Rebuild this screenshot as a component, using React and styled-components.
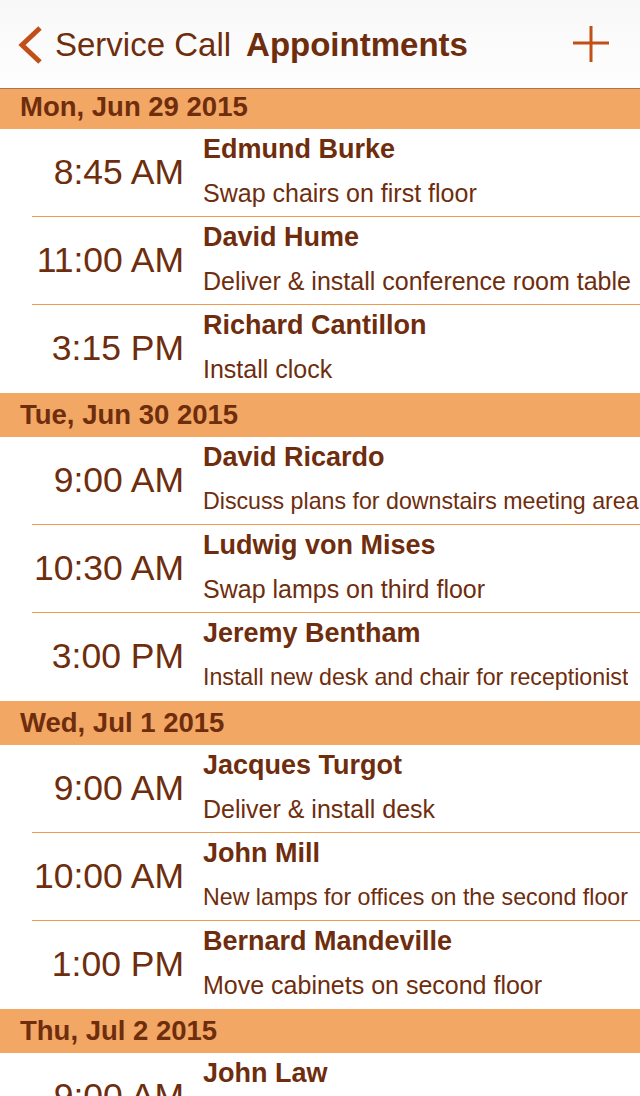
import React from 'react';
import styled, { createGlobalStyle } from 'styled-components';

const GlobalStyle = createGlobalStyle`
  html, body {
    margin: 0;
    padding: 0;
    overflow: hidden;
    background: #ffffff;
    font-family: "Liberation Sans", Arial, sans-serif;
  }
`;

const brown = '#6e2d0d';
const accent = '#c24f18';

const Screen = styled.div`
  position: relative;
  width: 640px;
  height: 1096px;
  overflow: hidden;
  background: #fff;
`;

const NavBar = styled.div`
  position: absolute;
  top: 0;
  left: 0;
  right: 0;
  z-index: 2;
  height: 88px;
  display: flex;
  align-items: center;
  padding: 0 0 0 17px;
  background: linear-gradient(#f8f8f8, #fefefe);
  border-bottom: 1px solid #a9784f;
  color: ${brown};
`;

const BackButton = styled.div`
  display: flex;
  align-items: center;
  gap: 12px;
  font-size: 33px;
  color: ${brown};
  padding-top: 2px;
`;

const Title = styled.div`
  margin-left: 15px;
  font-size: 33px;
  font-weight: bold;
  padding-top: 2px;
`;

const AddButton = styled.div`
  margin-left: auto;
  width: 36px;
  height: 36px;
  margin-right: 31px;
  display: flex;
`;

const List = styled.div`
  padding-top: 85px;
`;

const SectionHeader = styled.div`
  height: 44px;
  line-height: 44px;
  padding-left: 20px;
  background: #f2a764;
  color: ${brown};
  font-size: 27.5px;
  font-weight: bold;
`;

const Row = styled.div`
  margin-left: 32px;
  height: 88px;
  box-sizing: border-box;
  display: flex;
  align-items: stretch;
  border-bottom: 1px solid #f09c4c;

  &:last-child {
    border-bottom: none;
  }
`;

const Time = styled.div`
  width: 152px;
  flex-shrink: 0;
  display: flex;
  align-items: center;
  justify-content: flex-end;
  padding-bottom: 1px;
  font-size: 35.5px;
  color: ${brown};
  white-space: nowrap;
`;

const Details = styled.div`
  margin-left: 19px;
  padding-top: 4px;
  display: flex;
  flex-direction: column;
  white-space: nowrap;
  overflow: hidden;
`;

const Name = styled.div`
  font-size: 27px;
  line-height: 32px;
  font-weight: bold;
  color: ${brown};
`;

// long descriptions are shrunk to fit the row, as the original list does
const Task = styled.div`
  margin-top: 13px;
  font-size: ${(p) => (p.$fit ? '23.2px' : '25px')};
  line-height: 30px;
  color: ${brown};
`;

const days = [
  {
    label: 'Mon, Jun 29 2015',
    items: [
      ['8:45 AM', 'Edmund Burke', 'Swap chairs on first floor'],
      ['11:00 AM', 'David Hume', 'Deliver & install conference room table'],
      ['3:15 PM', 'Richard Cantillon', 'Install clock'],
    ],
  },
  {
    label: 'Tue, Jun 30 2015',
    items: [
      ['9:00 AM', 'David Ricardo', 'Discuss plans for downstairs meeting area', true],
      ['10:30 AM', 'Ludwig von Mises', 'Swap lamps on third floor'],
      ['3:00 PM', 'Jeremy Bentham', 'Install new desk and chair for receptionist', true],
    ],
  },
  {
    label: 'Wed, Jul 1 2015',
    items: [
      ['9:00 AM', 'Jacques Turgot', 'Deliver & install desk'],
      ['10:00 AM', 'John Mill', 'New lamps for offices on the second floor', true],
      ['1:00 PM', 'Bernard Mandeville', 'Move cabinets on second floor'],
    ],
  },
  {
    label: 'Thu, Jul 2 2015',
    items: [['9:00 AM', 'John Law', 'Review office layout']],
  },
];

const App = () => {
  return (
    <Screen>
      <GlobalStyle />
      <NavBar>
        <BackButton>
          <svg width="26" height="40" viewBox="0 0 26 40">
            <polyline
              points="23,3 5,20 23,37"
              fill="none"
              stroke={accent}
              strokeWidth="5"
            />
          </svg>
          Service Call
        </BackButton>
        <Title>Appointments</Title>
        <AddButton>
          <svg width="36" height="36" viewBox="0 0 36 36">
            <path d="M18 0 V36 M0 17 H36" stroke={accent} strokeWidth="3" />
          </svg>
        </AddButton>
      </NavBar>
      <List>
        {days.map((day) => (
          <div key={day.label}>
            <SectionHeader>{day.label}</SectionHeader>
            {day.items.map(([time, name, task, fit]) => (
              <Row key={name}>
                <Time>{time}</Time>
                <Details>
                  <Name>{name}</Name>
                  <Task $fit={fit}>{task}</Task>
                </Details>
              </Row>
            ))}
          </div>
        ))}
      </List>
    </Screen>
  );
};

export default App;
